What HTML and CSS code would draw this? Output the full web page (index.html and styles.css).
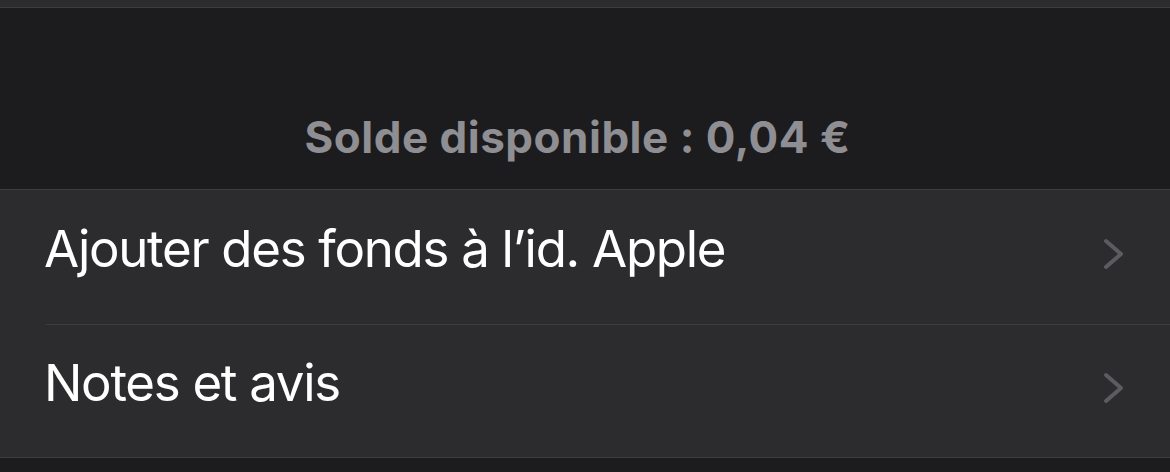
FILE: index.html
```html
<!DOCTYPE html>
<html lang="fr">
<head>
<meta charset="utf-8">
<link rel="stylesheet" href="styles.css">
</head>
<body>
<div class="top-row"></div>
<div class="header">
  <div class="balance">Solde disponible : 0,04 €</div>
</div>
<div class="list">
  <div class="row">
    <span class="label">Ajouter des fonds à l’id. Apple</span>
    <svg class="chev" width="24" height="34" viewBox="0 0 24 34"><polyline points="4,4 19,17 4,30" fill="none" stroke="#5c5c60" stroke-width="4" stroke-linecap="round" stroke-linejoin="round"/></svg>
  </div>
  <div class="row">
    <span class="label">Notes et avis</span>
    <svg class="chev" width="24" height="34" viewBox="0 0 24 34"><polyline points="4,4 19,17 4,30" fill="none" stroke="#5c5c60" stroke-width="4" stroke-linecap="round" stroke-linejoin="round"/></svg>
  </div>
</div>
</body>
</html>
```
FILE: styles.css
```css
html, body {
  margin: 0;
  padding: 0;
  background: #1c1c1e;
  font-family: Inter, "Noto Sans", "Liberation Sans", sans-serif;
}
.top-row {
  height: 7px;
  background: #2c2c2e;
  border-bottom: 1px solid #3d3d41;
}
.header {
  height: 182px;
  display: flex;
  align-items: flex-end;
  justify-content: center;
  border-bottom: 1px solid #3d3d41;
  box-sizing: border-box;
  padding-bottom: 29px;
}
.balance {
  color: #8e8e93;
  font-size: 44px;
  font-weight: 700;
  letter-spacing: 0.5px;
  line-height: 46px;
  margin-right: 15px;
}
.list {
  background: #2c2c2e;
  border-bottom: 1px solid #3d3d41;
}
.row {
  height: 134px;
  box-sizing: border-box;
  display: flex;
  align-items: center;
  justify-content: space-between;
  margin-left: 46px;
  padding-right: 44px;
}
.row + .row {
  height: 133px;
  border-top: 1px solid #3d3d41;
}
.label {
  color: #ffffff;
  font-size: 51px;
  letter-spacing: -1.3px;
  line-height: 60px;
  margin-left: -2px;
  margin-bottom: 16px;
}
.chev {
  display: block;
  margin-top: -6px;
}
```
